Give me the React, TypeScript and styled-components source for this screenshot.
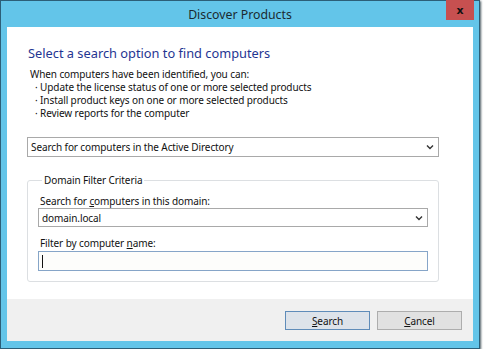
import React from "react";
import styled, { createGlobalStyle } from "styled-components";

const Global = createGlobalStyle`
  html, body { margin: 0; padding: 0; background: #ffffff; }
  body { font-family: "Noto Sans", "Open Sans", sans-serif; }
`;

const Window = styled.div`
  width: 480px;
  height: 349px;
  box-sizing: border-box;
  border: 1px solid #2c5f78;
  background: #63c5e9;
  display: flex;
  flex-direction: column;
  box-shadow: 1px 1px 2px rgba(20, 40, 50, 0.75);
`;

const TitleBar = styled.div`
  position: relative;
  height: 26px;
  flex: none;
  display: flex;
  align-items: center;
  justify-content: center;
  font-size: 12.3px;
  color: #1b2a30;
`;

const CloseButton = styled.div`
  position: absolute;
  top: -1px;
  right: 5px;
  width: 28px;
  height: 20px;
  background: #c75050;
  display: flex;
  align-items: center;
  justify-content: center;
  color: #111;
  font-family: "DejaVu Sans", sans-serif;
  font-weight: bold;
  font-size: 11px;
`;

const Client = styled.div`
  flex: 1;
  margin: 0 6px 7px 6px;
  background: #ffffff;
  display: flex;
  flex-direction: column;
`;

const Content = styled.div`
  flex: 1;
  padding: 16px 34px 0 20px;
  display: flex;
  flex-direction: column;
  font-size: 10px;
  letter-spacing: -0.1px;
  color: #111;
`;

const Heading = styled.div`
  font-size: 12.8px;
  letter-spacing: 0;
  line-height: 20px;
  color: #1f3592;
  padding-left: 1px;
`;

const Para = styled.div`
  margin-top: 5px;
  line-height: 13px;
  padding-left: 3px;
`;

const Bullet = styled.div`
  padding-left: 5px;
`;

const Combo = styled.div<{ $h?: number }>`
  box-sizing: border-box;
  height: ${(p) => p.$h ?? 20}px;
  border: 1px solid #a9a9a9;
  background: #fff;
  display: flex;
  align-items: center;
  justify-content: space-between;
  padding: 0 4px 0 3px;
`;

const Chevron = styled.svg`
  width: 8px;
  height: 6px;
`;

const TopCombo = styled(Combo)`
  margin-top: 17px;
`;

const Group = styled.fieldset`
  margin: 16px 0 0 0;
  padding: 8px 10px 10px 10px;
  border: 1px solid #dcdfe2;
  border-radius: 3px;
  min-width: 0;
`;

const Legend = styled.legend`
  line-height: 14px;
  padding: 0 2px;
  margin-left: 4px;
`;

const Label = styled.div<{ $mt?: number }>`
  line-height: 13px;
  padding-left: 2px;
  margin-top: ${(p) => p.$mt ?? 0}px;
  margin-bottom: ${(p) => (p.$mt ? 1 : 0)}px;
`;

const TextInput = styled.div`
  box-sizing: border-box;
  height: 20px;
  border: 1px solid #86a5c8;
  background: #fdfdfb;
  display: flex;
  align-items: center;
  padding-left: 3px;
`;

const Caret = styled.div`
  width: 1px;
  height: 13px;
  background: #111;
`;

const Footer = styled.div`
  height: 42px;
  flex: none;
  background: #f0f0f0;
  display: flex;
  justify-content: flex-end;
  align-items: flex-start;
  gap: 7px;
  padding: 12px 11px 0 0;
  box-sizing: border-box;
`;

const Button = styled.div<{ $default?: boolean }>`
  box-sizing: border-box;
  width: 85px;
  height: 19px;
  border: 1px solid ${(p) => (p.$default ? "#5f8cb9" : "#adadad")};
  background: ${(p) => (p.$default ? "#dde3ea" : "#e1e1e1")};
  display: flex;
  align-items: center;
  justify-content: center;
  font-size: 10px;
  letter-spacing: -0.1px;
  color: #111;
`;

const ChevronIcon = () => (
  <Chevron viewBox="0 0 8 6">
    <path d="M1 1.5 L4 4.5 L7 1.5" stroke="#333" strokeWidth="1.4" fill="none" />
  </Chevron>
);

export default function App() {
  return (
    <>
      <Global />
      <Window>
        <TitleBar>
          Discover Products
          <CloseButton>x</CloseButton>
        </TitleBar>
        <Client>
          <Content>
            <Heading>Select a search option to find computers</Heading>
            <Para>
              When computers have been identified, you can:
              <Bullet>· Update the license status of one or more selected products</Bullet>
              <Bullet>· Install product keys on one or more selected products</Bullet>
              <Bullet>· Review reports for the computer</Bullet>
            </Para>
            <TopCombo>
              <span>Search for computers in the Active Directory</span>
              <ChevronIcon />
            </TopCombo>
            <Group>
              <Legend>Domain Filter Criteria</Legend>
              <Label>
                Search for <u>c</u>omputers in this domain:
              </Label>
              <Combo $h={19}>
                <span>domain.local</span>
                <ChevronIcon />
              </Combo>
              <Label $mt={10}>
                Filter by computer <u>n</u>ame:
              </Label>
              <TextInput>
                <Caret />
              </TextInput>
            </Group>
          </Content>
          <Footer>
            <Button $default>
              <span>
                <u>S</u>earch
              </span>
            </Button>
            <Button>
              <span>
                <u>C</u>ancel
              </span>
            </Button>
          </Footer>
        </Client>
      </Window>
    </>
  );
}
